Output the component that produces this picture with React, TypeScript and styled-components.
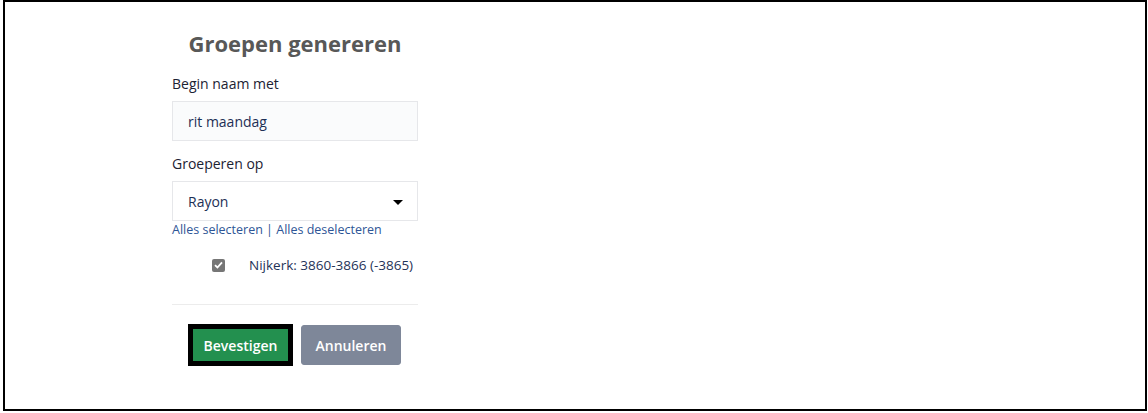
import styled, { createGlobalStyle } from "styled-components";

const GlobalStyle = createGlobalStyle`
    body {
        margin: 0;
        background: #ffffff;
        font-family: "Open Sans", "Liberation Sans", sans-serif;
    }
`;

const Frame = styled.div`
    box-sizing: border-box;
    width: 1144px;
    height: 411px;
    margin-left: 3px;
    border: 2px solid #000;
    padding: 27px 0 0 167px;
`;

const Form = styled.form`
    width: 246px;
    display: flex;
    flex-direction: column;
`;

const Title = styled.h2`
    margin: 0 0 18px;
    font-size: 22px;
    line-height: 28px;
    font-weight: 700;
    color: #585858;
    text-align: center;
`;

const Label = styled.label`
    display: block;
    margin-bottom: 8px;
    font-size: 14px;
    line-height: 18px;
    color: #1c2233;
`;

const Field = styled.div<{ $gap?: number }>`
    margin-bottom: ${({ $gap }) => $gap ?? 0}px;
`;

const TextInput = styled.div`
    box-sizing: border-box;
    height: 40px;
    padding: 0 15px;
    display: flex;
    align-items: center;
    background: #fafbfc;
    border: 1px solid #e6e7ea;
    font-size: 14px;
    color: #1d2f55;
`;

const Select = styled(TextInput)`
    justify-content: space-between;
    background: #ffffff;
    padding-right: 14px;
`;

const Caret = styled.span`
    width: 0;
    height: 0;
    margin-top: 3px;
    border-left: 5px solid transparent;
    border-right: 5px solid transparent;
    border-top: 5px solid #000;
`;

const Links = styled.div`
    font-size: 12.5px;
    line-height: 17px;
    color: #2e5596;
    margin-bottom: 17px;
`;

const LinkText = styled.a`
    color: inherit;
    text-decoration: none;
`;

const CheckRow = styled.div`
    display: flex;
    align-items: center;
    gap: 24px;
    padding-left: 40px;
    font-size: 13.5px;
    line-height: 20px;
    white-space: nowrap;
    color: #1f3358;
`;

const Check = styled.span`
    box-sizing: border-box;
    flex: none;
    width: 13px;
    height: 13px;
    border-radius: 2px;
    background: #767676;
    display: flex;
    align-items: center;
    justify-content: center;
`;

const Divider = styled.hr`
    width: 100%;
    margin: 29px 0 19px;
    border: 0;
    border-top: 1px solid #ececec;
`;

const Actions = styled.div`
    display: flex;
    align-items: center;
    gap: 8px;
    padding-left: 16px;
`;

const Button = styled.button<{ $variant: "primary" | "secondary" }>`
    box-sizing: border-box;
    font-family: "Open Sans", "Liberation Sans", sans-serif;
    font-size: 14px;
    font-weight: 600;
    color: #ffffff;
    cursor: pointer;
    ${({ $variant }) =>
        $variant === "primary"
            ? `
        width: 105px;
        height: 42px;
        background: #23904f;
        border: 5px solid #000;
        border-radius: 0;
    `
            : `
        width: 100px;
        height: 40px;
        background: #7e8799;
        border: 1px solid #7e8799;
        border-radius: 3px;
    `}
`;

export default function App() {
    return (
        <>
            <GlobalStyle />
            <Frame>
                <Form onSubmit={(e) => e.preventDefault()}>
                    <Title>Groepen genereren</Title>
                    <Field $gap={14}>
                        <Label>Begin naam met</Label>
                        <TextInput>rit maandag</TextInput>
                    </Field>
                    <Field>
                        <Label>Groeperen op</Label>
                        <Select>
                            Rayon
                            <Caret />
                        </Select>
                    </Field>
                    <Links>
                        <LinkText href="#">Alles selecteren</LinkText> |{" "}
                        <LinkText href="#">Alles deselecteren</LinkText>
                    </Links>
                    <CheckRow>
                        <Check>
                            <svg width="9" height="8" viewBox="0 0 9 8">
                                <path
                                    d="M1 4.2 L3.4 6.5 L8 1.3"
                                    fill="none"
                                    stroke="#fff"
                                    strokeWidth="1.8"
                                />
                            </svg>
                        </Check>
                        <span>Nijkerk: 3860-3866 (-3865)</span>
                    </CheckRow>
                    <Divider />
                    <Actions>
                        <Button type="submit" $variant="primary">
                            Bevestigen
                        </Button>
                        <Button type="button" $variant="secondary">
                            Annuleren
                        </Button>
                    </Actions>
                </Form>
            </Frame>
        </>
    );
}
